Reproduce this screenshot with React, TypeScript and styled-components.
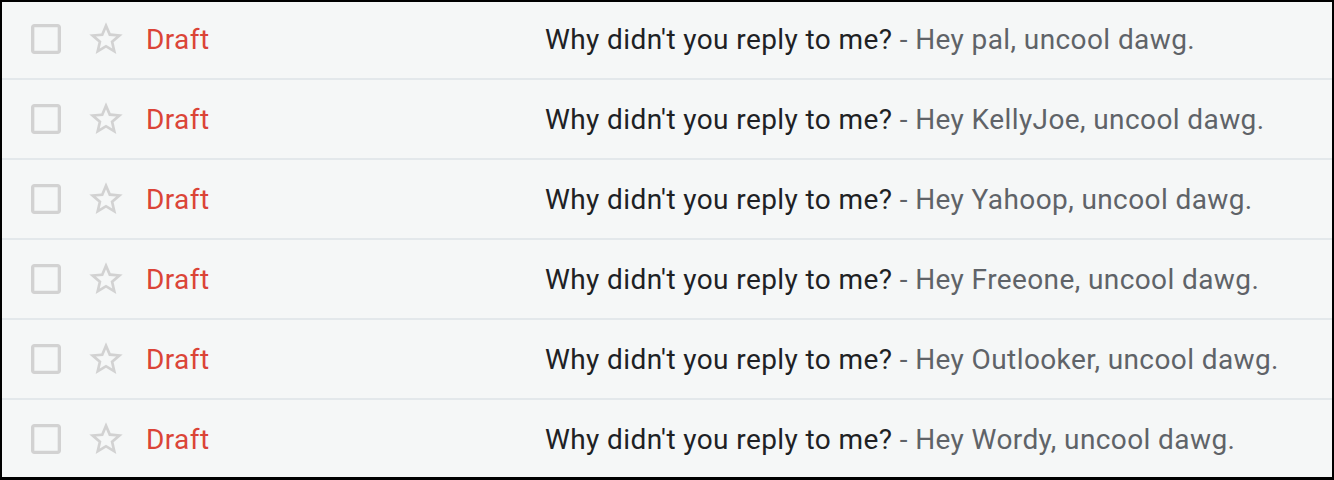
import React from "react";
import { styled, createGlobalStyle } from "styled-components";

const GlobalStyle = createGlobalStyle`
  html, body {
    margin: 0;
    padding: 0;
    background: #f5f7f7;
  }
  body {
    font-family: Roboto, "Noto Sans", Arial, sans-serif;
  }
`;

const List = styled.div`
  position: relative;
  height: 480px;
  overflow: hidden;
  background: #f5f7f7;

  &::after {
    content: "";
    position: absolute;
    inset: 0;
    border: 2px solid #000;
    border-bottom-width: 3px;
    pointer-events: none;
  }
`;

const Row = styled.div`
  height: 78px;
  display: flex;
  align-items: center;
  padding-left: 26px;
  border-bottom: 2px solid #e3e8eb;
  background: #f5f7f7;
`;

const IconSlot = styled.span`
  width: 40px;
  height: 40px;
  display: flex;
  margin-right: 20px;
  color: #d2d2d2;
`;

const Sender = styled.span`
  width: 399px;
  color: #db4437;
  font-size: 28px;
  letter-spacing: 0.4px;
  flex-shrink: 0;
`;

const Message = styled.span`
  font-size: 28px;
  letter-spacing: 0.4px;
  white-space: nowrap;
`;

const Subject = styled.span`
  color: #202124;
`;

const Snippet = styled.span`
  color: #5f6368;
`;

const CheckboxIcon = () => (
  <svg viewBox="0 0 24 24" width="40" height="40" fill="currentColor">
    <path d="M19 5v14H5V5h14m0-2H5c-1.11 0-2 .9-2 2v14c0 1.1.89 2 2 2h14c1.1 0 2-.9 2-2V5c0-1.1-.9-2-2-2z" />
  </svg>
);

const StarIcon = () => (
  <svg viewBox="0 0 24 24" width="40" height="40" fill="currentColor">
    <path d="M22 9.24l-7.19-.62L12 2 9.19 8.63 2 9.24l5.46 4.73L5.82 21 12 17.27 18.18 21l-1.63-7.03L22 9.24zM12 15.4l-3.760 2.27 1-4.28-3.32-2.88 4.38-.38L12 6.1l1.71 4.04 4.38.38-3.32 2.88 1 4.28L12 15.4z" />
  </svg>
);

const names = ["pal", "KellyJoe", "Yahoop", "Freeone", "Outlooker", "Wordy"];

const App: React.FC = () => (
  <>
    <GlobalStyle />
    <List>
      {names.map((name) => (
        <Row key={name}>
          <IconSlot>
            <CheckboxIcon />
          </IconSlot>
          <IconSlot>
            <StarIcon />
          </IconSlot>
          <Sender>Draft</Sender>
          <Message>
            <Subject>Why didn't you reply to me?</Subject>
            <Snippet> - Hey {name}, uncool dawg.</Snippet>
          </Message>
        </Row>
      ))}
    </List>
  </>
);

export default App;
